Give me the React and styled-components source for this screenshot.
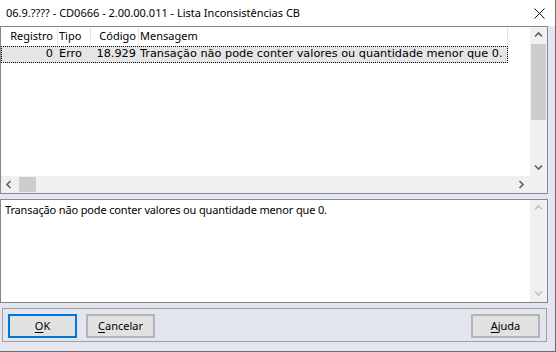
import React from "react";
import styled, { createGlobalStyle } from "styled-components";

const Global = createGlobalStyle`
  html, body { margin: 0; padding: 0; background: #fff; }
  * { box-sizing: border-box; }
`;

const ui = `"Noto Sans", "Open Sans", sans-serif`;
const listFont = `"DejaVu Sans", Verdana, sans-serif`;

const Chevron = ({ dir = "up", disabled }) => {
  const paths = {
    up: "M1 5.5 L4.5 2 L8 5.5",
    down: "M1 2.5 L4.5 6 L8 2.5",
    left: "M5.5 1 L2 4.5 L5.5 8",
    right: "M2.5 1 L6 4.5 L2.5 8",
  };
  return (
    <svg width="9" height="9" viewBox="0 0 9 9">
      <path d={paths[dir]} fill="none" stroke={disabled ? "#c2c2c2" : "#606060"} strokeWidth="1.6" />
    </svg>
  );
};

const columns = [
  { title: "Registro", w: 57, align: "right", pl: 0, pr: 4 },
  { title: "Tipo", w: 33, align: "left", pl: 1, pr: 0 },
  { title: "Código", w: 48, align: "right", pl: 0, pr: 2 },
  { title: "Mensagem", w: 369, align: "left", pl: 1, pr: 0 },
];

const rows = [["0", "Erro", "18.929", "Transação não pode conter valores ou quantidade menor que 0."]];

export default function App() {
  return (
    <>
      <Global />
      <Window>
        <TitleBar>
          <Title>06.9.???? - CD0666 - 2.00.00.011 - Lista Inconsistências CB</Title>
          <Close>
            <svg width="11" height="11" viewBox="0 0 11 11">
              <path d="M0.5 0.5 L10.5 10.5 M10.5 0.5 L0.5 10.5" stroke="#111" strokeWidth="1" />
            </svg>
          </Close>
        </TitleBar>
        <Client>
          <ListView>
            <ListArea>
              <Header>
                {columns.map((c) => (
                  <HeadCell key={c.title} $w={c.w} $align={c.align} $pl={c.pl} $pr={c.pr}>
                    {c.title}
                  </HeadCell>
                ))}
              </Header>
              {rows.map((r, i) => (
                <Row key={i} $selected>
                  {r.map((v, j) => (
                    <Cell key={j} $w={columns[j].w} $align={columns[j].align} $pl={columns[j].pl} $pr={columns[j].pr}>
                      {v}
                    </Cell>
                  ))}
                </Row>
              ))}
            </ListArea>
            <VScroll>
              <ArrowBtn><Chevron dir="up" /></ArrowBtn>
              <Track>
                <VThumb />
              </Track>
              <ArrowBtn><Chevron dir="down" /></ArrowBtn>
            </VScroll>
            <HScroll>
              <ArrowBtn><Chevron dir="left" /></ArrowBtn>
              <HTrack>
                <HThumb />
              </HTrack>
              <ArrowBtn><Chevron dir="right" /></ArrowBtn>
            </HScroll>
            <Corner />
          </ListView>

          <Memo>
            <MemoText>Transação não pode conter valores ou quantidade menor que 0.</MemoText>
            <VScroll $disabled>
              <ArrowBtn><Chevron dir="up" disabled /></ArrowBtn>
              <Track />
              <ArrowBtn><Chevron dir="down" disabled /></ArrowBtn>
            </VScroll>
          </Memo>

          <ButtonPanel>
            <Button $default><u>O</u>K</Button>
            <Button><u>C</u>ancelar</Button>
            <Spacer />
            <Button><u>A</u>juda</Button>
          </ButtonPanel>
        </Client>
      </Window>
    </>
  );
}

const Window = styled.div`
  width: 556px;
  height: 352px;
  display: flex;
  flex-direction: column;
  background: #e3e6ee;
  border-right: 1px solid #6b6b6b;
  border-bottom: 1px solid #6b6b6b;
  font-family: ${ui};
  font-size: 11px;
  color: #000;
  overflow: hidden;
`;

const TitleBar = styled.div`
  height: 26px;
  flex: none;
  display: flex;
  align-items: center;
  background: #fff;
  padding-left: 6px;
`;

const Title = styled.div`
  flex: 1;
  font-size: 11px;
  white-space: nowrap;
  padding-bottom: 1px;
`;

const Close = styled.div`
  width: 46px;
  height: 26px;
  display: flex;
  align-items: center;
  justify-content: center;
  margin-right: -7px;
`;

const Client = styled.div`
  flex: 1;
  display: flex;
  flex-direction: column;
  padding: 0 7px 9px 0;
`;

const ListView = styled.div`
  height: 168px;
  flex: none;
  border: 1px solid #828790;
  background: #fff;
  display: grid;
  grid-template-columns: 1fr 17px;
  grid-template-rows: 1fr 17px;
`;

const ListArea = styled.div`
  background: #fff;
  overflow: hidden;
`;

const Header = styled.div`
  display: flex;
  height: 18px;
  align-items: stretch;
`;

const HeadCell = styled.div`
  width: ${(p) => p.$w}px;
  flex: none;
  text-align: ${(p) => p.$align};
  padding-left: ${(p) => p.$pl}px;
  padding-right: ${(p) => p.$pr}px;
  border-right: 1px solid #e5e5e5;
  line-height: 17px;
  white-space: nowrap;
`;

const Row = styled.div`
  display: flex;
  width: 507px;
  height: 17px;
  background: ${(p) => (p.$selected ? "#e5e5e5" : "transparent")};
  outline: ${(p) => (p.$selected ? "1px dotted #000" : "none")};
  outline-offset: -1px;
  font-family: ${listFont};
  font-size: 11.3px;
  margin-top: 1px;
`;

const Cell = styled.div`
  width: ${(p) => p.$w}px;
  flex: none;
  text-align: ${(p) => p.$align};
  padding-left: ${(p) => p.$pl}px;
  padding-right: ${(p) => p.$pr + 1}px;
  line-height: 16px;
  white-space: nowrap;
`;

const VScroll = styled.div`
  display: flex;
  flex-direction: column;
  background: #f0f0f0;
`;

const HScroll = styled.div`
  display: flex;
  background: #f0f0f0;
`;

const ArrowBtn = styled.div`
  width: 17px;
  height: 17px;
  flex: none;
  display: flex;
  align-items: center;
  justify-content: center;
`;

const Track = styled.div`
  flex: 1;
  padding: 0 1px;
`;

const VThumb = styled.div`
  height: 76px;
  background: #cdcdcd;
`;

const HTrack = styled.div`
  flex: 1;
  padding: 1px 0;
  padding-left: 1px;
`;

const HThumb = styled.div`
  width: 17px;
  height: 100%;
  background: #cdcdcd;
`;

const Corner = styled.div`
  background: #f0f0f0;
`;

const Memo = styled.div`
  margin-top: 5px;
  height: 104px;
  flex: none;
  border: 1px solid #828790;
  background: #fff;
  display: grid;
  grid-template-columns: 1fr 17px;
`;

const MemoText = styled.div`
  padding: 2px 4px;
  line-height: 16px;
  letter-spacing: -0.15px;
  white-space: nowrap;
  overflow: hidden;
`;

const ButtonPanel = styled.div`
  margin: 5px 1px 0 2px;
  height: 34px;
  flex: none;
  border: 1px solid #a0a0a0;
  display: flex;
  align-items: flex-start;
  gap: 9px;
  padding: 5px 6px 0 5px;
`;

const Spacer = styled.div`
  flex: 1;
`;

const Button = styled.button`
  width: 69px;
  height: 24px;
  flex: none;
  padding: 0;
  background: #e1e1e1;
  border: 2px solid ${(p) => (p.$default ? "#0078d7" : "#b4b4b4")};
  font-family: ${ui};
  font-size: 11px;
  color: #000;
  line-height: 18px;
  cursor: pointer;
  u { text-underline-offset: 2px; }
`;
